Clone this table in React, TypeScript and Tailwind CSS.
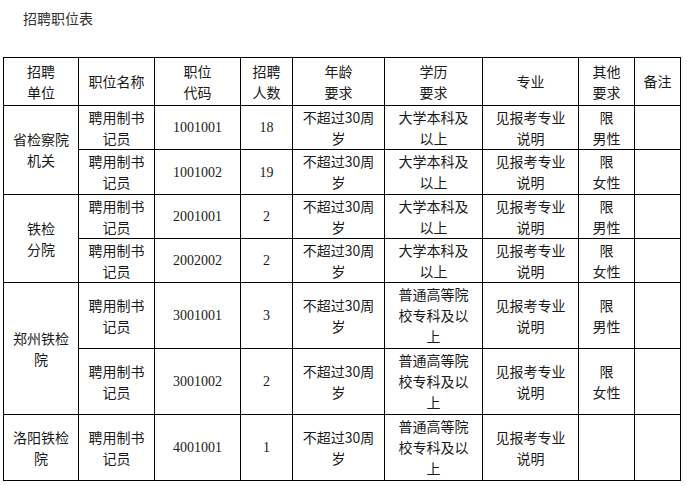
import React from "react";

const cjk = '"Noto Sans CJK SC", "Noto Sans", sans-serif';

type Row = {
  unit?: { text: React.ReactNode; span: number };
  code: string;
  count: string;
  edu: React.ReactNode;
  other: React.ReactNode;
  h: string;
};

const twoYears = (
  <>
    不超过30周
    <br />岁
  </>
);
const bachelor = (
  <>
    大学本科及
    <br />
    以上
  </>
);
const college = (
  <>
    普通高等院
    <br />
    校专科及以
    <br />上
  </>
);
const male = (
  <>
    限<br />
    男性
  </>
);
const female = (
  <>
    限<br />
    女性
  </>
);

const rows: Row[] = [
  {
    unit: { text: <>省检察院<br />机关</>, span: 2 },
    code: "1001001",
    count: "18",
    edu: bachelor,
    other: male,
    h: "h-[44px]",
  },
  { code: "1001002", count: "19", edu: bachelor, other: female, h: "h-[45px]" },
  {
    unit: { text: <>铁检<br />分院</>, span: 2 },
    code: "2001001",
    count: "2",
    edu: bachelor,
    other: male,
    h: "h-[44px]",
  },
  { code: "2002002", count: "2", edu: bachelor, other: female, h: "h-[44px]" },
  {
    unit: { text: <>郑州铁检<br />院</>, span: 2 },
    code: "3001001",
    count: "3",
    edu: college,
    other: male,
    h: "h-[66px]",
  },
  { code: "3001002", count: "2", edu: college, other: female, h: "h-[66px]" },
  {
    unit: { text: <>洛阳铁检<br />院</>, span: 1 },
    code: "4001001",
    count: "1",
    edu: college,
    other: "",
    h: "h-[66px]",
  },
];

const cell = "border border-black text-center align-middle p-0 leading-[21px]";
const serif = "font-['Liberation_Serif',serif]";

export default function App() {
  return (
    <div
      className="w-[687px] h-[486px] bg-white text-[14px] leading-[22px] text-[#1a1a1a] overflow-hidden"
      style={{ fontFamily: cjk }}
    >
      <div className="pt-[7px] pl-[23px] text-[#333] leading-[22px]">招聘职位表</div>
      <table className="mt-[28px] ml-[3px] border-collapse table-fixed w-[677px]">
        <colgroup>
          <col className="w-[75px]" />
          <col className="w-[76px]" />
          <col className="w-[86px]" />
          <col className="w-[52px]" />
          <col className="w-[92px]" />
          <col className="w-[98px]" />
          <col className="w-[96px]" />
          <col className="w-[56px]" />
          <col className="w-[46px]" />
        </colgroup>
        <thead>
          <tr className="h-[48px]">
            <th className={`${cell} font-normal`}>招聘<br />单位</th>
            <th className={`${cell} font-normal`}>职位名称</th>
            <th className={`${cell} font-normal`}>职位<br />代码</th>
            <th className={`${cell} font-normal`}>招聘<br />人数</th>
            <th className={`${cell} font-normal`}>年龄<br />要求</th>
            <th className={`${cell} font-normal`}>学历<br />要求</th>
            <th className={`${cell} font-normal`}>专业</th>
            <th className={`${cell} font-normal`}>其他<br />要求</th>
            <th className={`${cell} font-normal`}>备注</th>
          </tr>
        </thead>
        <tbody>
          {rows.map((r, i) => (
            <tr key={i} className={r.h}>
              {r.unit && (
                <td className={cell} rowSpan={r.unit.span}>
                  {r.unit.text}
                </td>
              )}
              <td className={cell}>
                聘用制书
                <br />
                记员
              </td>
              <td className={`${cell} ${serif}`}>{r.code}</td>
              <td className={`${cell} ${serif}`}>{r.count}</td>
              <td className={cell}>{twoYears}</td>
              <td className={cell}>{r.edu}</td>
              <td className={cell}>
                见报考专业
                <br />
                说明
              </td>
              <td className={cell}>{r.other}</td>
              <td className={cell}></td>
            </tr>
          ))}
        </tbody>
      </table>
    </div>
  );
}
